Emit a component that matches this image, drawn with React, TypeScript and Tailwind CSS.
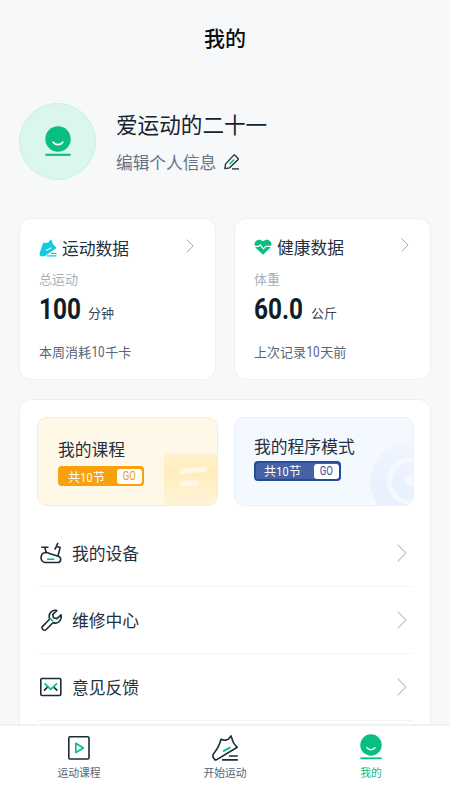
import React from 'react';

const ChevronIcon = ({ className }: { className?: string }) => (
    <svg viewBox="0 0 10 18" fill="none" stroke="currentColor" strokeWidth="1.2" strokeLinecap="round" strokeLinejoin="round" className={className}>
        <path d="M1 1l8 8-8 8" />
    </svg>
);

const FaceIcon = ({ className }: { className?: string }) => (
    <svg viewBox="0 0 26 32" fill="none" className={className}>
        <circle cx="13" cy="13" r="12.7" fill="#08be83" />
        <path d="M8.2 16.2c2.2 3.2 7.4 3.2 9.6 0" stroke="#fff" strokeWidth="1.7" strokeLinecap="round" />
        <path d="M.4 28.8h25.2" stroke="#08be83" strokeWidth="2.1" />
    </svg>
);

const PencilIcon = () => (
    <svg viewBox="0 0 16 16" fill="none" stroke="#1b2b38" strokeWidth="1.3" strokeLinejoin="round" className="h-4 w-4">
        <path d="M.9 14.7l.6-4.6 8-8.7c.5-.5 1.1-.5 1.6 0l2.8 2.8c.5.5.5 1.1 0 1.6l-8.3 8z" />
        <path d="M8 14.9h7" />
        <path d="M5.600 10.300l4.600-4.800" stroke="#08be83" strokeWidth="1.6" />
    </svg>
);

const ShoeSolidIcon = () => (
    <svg viewBox="0 0 18 18" fill="none" className="h-[18px] w-[18px]">
        <path d="M4.3 3.6c1.5.7 2.7.5 3.7-.2.7.5 1.2.3 1.7-.5l1.6-2c.5-.6 1.2-.4 1.4.3l.6 2.3c.2 1.4 1.4 2.7 3.500 4.500.5.700.400 1.300-.300 1.700L5.500 17.300H1.700C.7 16.900.4 15.200.7 14z" fill="#10cbe0" />
        <path d="M7.500 11.300l4.500-2.400" stroke="#fff" strokeWidth="1.100" strokeLinecap="round" />
        <path d="M12 14.300h5.500M7.500 16.900h10" stroke="#10cbe0" strokeWidth="1.200" />
    </svg>
);

const HeartIcon = () => (
    <svg viewBox="0 0 18 16" fill="none" className="h-4 w-[18px]">
        <path d="M9 15.800L1.600 8.700C-2 4 3.800-2.300 9 2.300c5.200-4.600 11 1.700 7.400 6.400z" fill="#08be83" />
        <path d="M0 7.400h4.500l1.700-1.600 3.200 4.100 2.500-2.500H18" stroke="#fff" strokeWidth="1.200" />
    </svg>
);

const BikeIcon = () => (
    <svg viewBox="0 0 22 22" fill="none" stroke="#1b2b38" strokeWidth="1.6" strokeLinejoin="round" className="h-[22px] w-[22px]">
        <path d="M1.200 5.300h7.300M4.700 5.300l1.600 5.200" />
        <path d="M6 10.500c1.900 0 3 .7 5 1.600l7.300 2.200c3.700 1.200 2.800 6.200-.6 6.200H5.500C-.6 20.200-.4 10.700 6 10.500z" />
        <path d="M18 .8l-3.200 6.800M16.500 4.400l3.700 1.200-2.300 8.400" />
        <path d="M7.200 17.200h7" stroke="#08be83" />
    </svg>
);

const WrenchIcon = () => (
    <svg viewBox="0 0 22 22" fill="none" stroke="#1b2b38" strokeWidth="1.6" strokeLinejoin="round" className="h-[22px] w-[22px]">
        <path d="M16.800 1.600l-4 3.700.7 3.500 3.500.8 4-3.700c1.200 4.200-2.300 9.100-7 8-.8-.2-1.200 0-1.800.6l-6 6c-2.300 2.100-5.600-1-3.400-3.400l6-6.100c.6-.6.700-1.100.6-1.900C8.300 4 12.600.2 16.800 1.600z" />
        <path d="M9.500 8.800l3.800 3.700" stroke="#08be83" strokeWidth="1.700" />
    </svg>
);

const MailIcon = () => (
    <svg viewBox="0 0 22 20" fill="none" className="h-5 w-[22px]">
        <rect x=".8" y="1.5" width="20" height="17" rx="1.2" stroke="#1b2b38" strokeWidth="1.6" />
        <path d="M4 13.600l4-4M17.300 13.600l-4-4" stroke="#1b2b38" strokeWidth="1.6" />
        <path d="M4.500 6.300l6.200 6.100L17 6.300" stroke="#08be83" strokeWidth="1.7" />
    </svg>
);

const PlayIcon = () => (
    <svg viewBox="0 0 22 24" fill="none" strokeLinejoin="round" className="h-6 w-[22px]">
        <rect x=".8" y=".8" width="20.2" height="22.2" rx="1.3" stroke="#1b2b38" strokeWidth="1.6" />
        <path d="M7.800 7.300v9.200l7.600-4.600z" stroke="#08be83" strokeWidth="1.7" />
    </svg>
);

const ShoeIcon = () => (
    <svg viewBox="0 0 26 26" fill="none" stroke="#1b2b38" strokeWidth="1.6" strokeLinejoin="round" className="h-[26px] w-[26px]">
        <path d="M9 4.300c2.100 1 4 1.200 5.600.4 1.200.1 2-.5 2.500-1.400L19 .9l1.500 4.200c.4 2.200 2 4.500 4.800 7.200L4.300 24.900H3.100L.9 22v-1.600c.3-1.300 1.100-2.300 2.200-3.800C6 13.200 7.600 9.500 9 4.300z" />
        <path d="M11 16.400l7.400-4" stroke="#08be83" strokeWidth="1.8" />
        <path d="M17 21h8.800M10 24.900h15.800" strokeWidth="1.7" />
    </svg>
);

// Condensed digits set inside Chinese text
const Digits = ({ children }: { children: React.ReactNode }) => (
    <span className="mx-[-0.9px] inline-block scale-x-[0.82] font-['Roboto'] text-[1.1em] leading-none">{children}</span>
);

const STATS = [
    { title: '运动数据', icon: <ShoeSolidIcon />, label: '总运动', value: '100', unit: '分钟', valueClass: 'w-[41px]', before: '本周消耗', after: '千卡', headClass: 'pt-px' },
    { title: '健康数据', icon: <HeartIcon />, label: '体重', value: '60.0', unit: '公斤', valueClass: 'w-[49px]', before: '上次记录', after: '天前', headClass: 'pb-px' },
];

const MENU = [
    { label: '我的设备', icon: <BikeIcon /> },
    { label: '维修中心', icon: <WrenchIcon /> },
    { label: '意见反馈', icon: <MailIcon /> },
];

const TABS = [
    { label: '运动课程', icon: <PlayIcon />, active: false },
    { label: '开始运动', icon: <ShoeIcon />, active: false },
    { label: '我的', icon: <FaceIcon className="h-[27px] w-[22px]" />, active: true },
];

const App = () => {
    return (
        <div className="flex h-[800px] w-[450px] flex-col overflow-hidden bg-[#f7f8fa] font-['Noto_Sans_CJK_SC',sans-serif] text-[#1f303e]">
            <main className="flex min-h-0 flex-1 flex-col overflow-hidden px-[19px]">
                <h1 className="mt-[21px] shrink-0 text-center text-[21px] leading-8 font-medium text-[#0a0d10]">我的</h1>

                {/* Profile */}
                <section className="mt-[50px] flex shrink-0 items-center">
                    <div className="flex h-[77px] w-[77px] items-center justify-center rounded-full border border-[#c7f2e5] bg-[#daf6ee]">
                        <FaceIcon className="h-8 w-[26px]" />
                    </div>
                    <div className="ml-5">
                        <p className="text-[21.6px] leading-8 text-[#16232e]">爱运动的二十一</p>
                        <div className="mt-2 flex items-center gap-2 text-[16.7px] leading-7 text-[#647387]">
                            <span>编辑个人信息</span>
                            <PencilIcon />
                        </div>
                    </div>
                </section>

                {/* Data cards */}
                <section className="mt-[38px] grid shrink-0 grid-cols-[197px_197px] gap-[18px]">
                    {STATS.map((stat) => (
                        <div key={stat.title} className="h-[162px] rounded-xl border border-[#eeeff2] bg-white pt-4 pr-[21px] pl-[19px]">
                            <div className={`flex h-[25px] items-center ${stat.headClass}`}>
                                {stat.icon}
                                <span className="ml-[5px] text-[16.8px] leading-6">{stat.title}</span>
                                <ChevronIcon className="mb-1 ml-auto h-[14px] w-2 text-[#98a2ad]" />
                            </div>
                            <p className="mt-[9px] text-[13px] leading-5 text-[#a8afb9]">{stat.label}</p>
                            <div className="mt-1 flex h-8 items-center">
                                <span className={`${stat.valueClass} font-['Roboto'] text-[29px] leading-8 font-bold text-[#101d27]`}>
                                    <span className="inline-block origin-left scale-x-[0.84]">{stat.value}</span>
                                </span>
                                <span className="mt-[7px] ml-2 text-[13px] leading-5 text-[#34465a]">{stat.unit}</span>
                            </div>
                            <p className="mt-[17px] text-[13px] leading-5 text-[#566579]">
                                {stat.before}<Digits>10</Digits>{stat.after}
                            </p>
                        </div>
                    ))}
                </section>

                <section className="mt-[19px] h-[400px] shrink-0 rounded-xl border border-[#eeeff2] bg-white px-[17px] pt-[17px]">
                    <div className="grid grid-cols-[181px_180px] gap-4">
                        <div className="relative h-[89px] overflow-hidden rounded-[10px] border border-[#ffe9c4] bg-[#fff8e8] pt-[19px] pl-5">
                            <svg viewBox="0 0 53 53" fill="none" className="absolute right-0 bottom-0 h-[53px] w-[53px]">
                                <defs>
                                    <linearGradient id="note" x1="0" y1="0" x2="0" y2="1">
                                        <stop stopColor="#fff3cf" />
                                        <stop offset=".35" stopColor="#ffedbc" />
                                        <stop offset="1" stopColor="#fff4d8" />
                                    </linearGradient>
                                </defs>
                                <path d="M0 53V5q0-4 4-4h49v52z" fill="url(#note)" />
                                <path d="M17.500 19.300l23.500-2.200M17.500 32l14.500-1.300" stroke="#fff8e8" strokeWidth="5.4" strokeLinecap="round" />
                            </svg>
                            <p className="relative text-[16.8px] leading-6">我的课程</p>
                            <div className="relative mt-[5px] flex h-5 w-[86px] items-center justify-between rounded-[4px] bg-[#f9a10c] pr-0.5 pl-[10px] text-[12px] leading-5 text-white">
                                <span className="pt-px">共<Digits>10</Digits>节</span>
                                <span className="flex h-[15px] w-[25px] items-center justify-center rounded-[3px] bg-white font-['Roboto'] text-[12px] leading-[15px] text-[#f09b10]">
                                    <span className="scale-x-[0.8]">GO</span>
                                </span>
                            </div>
                        </div>
                        <div className="relative h-[89px] overflow-hidden rounded-[10px] border border-[#e8effd] bg-[#f4f8ff] pt-4 pl-[19px]">
                            <svg viewBox="0 0 43 64" fill="none" className="absolute right-0 bottom-0 h-16 w-[43px]">
                                <defs>
                                    <linearGradient id="dial" x1="0" y1="0" x2="0" y2="1">
                                        <stop stopColor="#f1f6ff" />
                                        <stop offset=".6" stopColor="#e9f0fe" />
                                    </linearGradient>
                                </defs>
                                <circle cx="40" cy="40" r="39.5" fill="url(#dial)" />
                                <path d="M41 18.500a21.700 21.700 0 1 0 0 43.400" stroke="#f5f8ff" strokeWidth="5" strokeLinecap="round" />
                                <path d="M43 31c-2 2.200-8.500 4-8.500 8s5 7 8.500 7z" fill="#f5f8ff" />
                            </svg>
                            <p className="relative text-[16.8px] leading-6">我的程序模式</p>
                            <div className="relative mt-[3px] flex h-5 w-[87px] items-center justify-between rounded-[4px] border-2 border-[#244a9d] bg-[#4661a6] pl-2 text-[12px] leading-5 text-white">
                                <span>共<Digits>10</Digits>节</span>
                                <span className="flex h-[15px] w-[25px] items-center justify-center rounded-[3px] bg-white font-['Roboto'] text-[12px] leading-[15px] text-[#365195]">
                                    <span className="scale-x-[0.8]">GO</span>
                                </span>
                            </div>
                        </div>
                    </div>

                    {/* Menu */}
                    <ul className="mt-[14px] w-[376px]">
                        {MENU.map((item) => (
                            <li key={item.label} className="flex h-[67px] items-center border-b border-[#f2f3f5] pr-[6px] pl-[3px]">
                                {item.icon}
                                <span className="ml-[10px] text-[16.8px] leading-6">{item.label}</span>
                                <ChevronIcon className="ml-auto h-[18px] w-[10px] text-[#c3c7cd]" />
                            </li>
                        ))}
                    </ul>
                </section>
            </main>

            {/* Bottom tab bar */}
            <nav className="grid h-[76px] shrink-0 grid-cols-3 border-t-2 border-[#f1f2f4] bg-white px-[6px] pt-2">
                {TABS.map((tab) => (
                    <div key={tab.label} className="flex flex-col items-center">
                        <span className="flex h-[27px] items-center">{tab.icon}</span>
                        <span className={`mt-[3px] text-[10.8px] leading-4 ${tab.active ? 'text-[#08be83]' : 'text-[#566579]'}`}>{tab.label}</span>
                    </div>
                ))}
            </nav>
        </div>
    );
};

export default App;
